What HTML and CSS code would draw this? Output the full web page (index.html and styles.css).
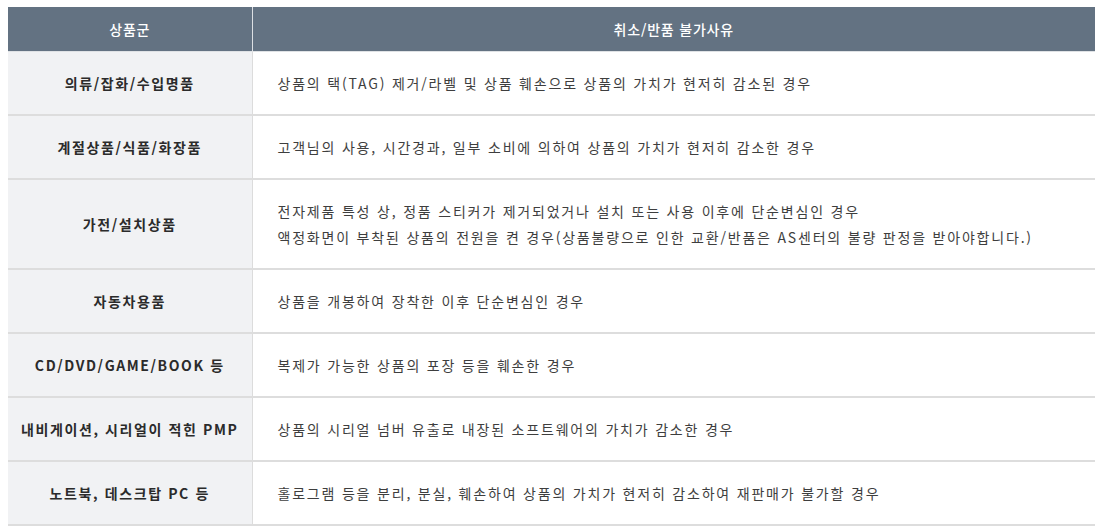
FILE: index.html
```html
<!DOCTYPE html>
<html lang="ko">
<head>
<meta charset="utf-8">
<link rel="stylesheet" href="styles.css">
</head>
<body>
<table class="policy">
  <colgroup><col class="c1"><col class="c2"></colgroup>
  <thead>
    <tr><th>상품군</th><th>취소/반품 불가사유</th></tr>
  </thead>
  <tbody>
    <tr><th>의류/잡화/수입명품</th><td>상품의 택(TAG) 제거/라벨 및 상품 훼손으로 상품의 가치가 현저히 감소된 경우</td></tr>
    <tr><th>계절상품/식품/화장품</th><td>고객님의 사용, 시간경과, 일부 소비에 의하여 상품의 가치가 현저히 감소한 경우</td></tr>
    <tr><th>가전/설치상품</th><td>전자제품 특성 상, 정품 스티커가 제거되었거나 설치 또는 사용 이후에 단순변심인 경우<br>액정화면이 부착된 상품의 전원을 켠 경우(상품불량으로 인한 교환/반품은 AS센터의 불량 판정을 받아야합니다.)</td></tr>
    <tr><th>자동차용품</th><td>상품을 개봉하여 장착한 이후 단순변심인 경우</td></tr>
    <tr><th>CD/DVD/GAME/BOOK 등</th><td>복제가 가능한 상품의 포장 등을 훼손한 경우</td></tr>
    <tr><th>내비게이션, 시리얼이 적힌 PMP</th><td>상품의 시리얼 넘버 유출로 내장된 소프트웨어의 가치가 감소한 경우</td></tr>
    <tr><th>노트북, 데스크탑 PC 등</th><td>홀로그램 등을 분리, 분실, 훼손하여 상품의 가치가 현저히 감소하여 재판매가 불가할 경우</td></tr>
  </tbody>
</table>
</body>
</html>
```
FILE: styles.css
```css
html, body {
  margin: 0;
  padding: 0;
  background: #ffffff;
}
body {
  padding: 7px 8px 0 8px;
  font-family: "Noto Sans CJK KR", "Noto Sans", sans-serif;
}
.policy {
  width: 1087px;
  border-collapse: collapse;
  table-layout: fixed;
  font-size: 14px;
}
.policy .c1 { width: 244px; }
.policy thead th {
  background: #637282;
  color: #ffffff;
  font-size: 14px;
  font-weight: 500;
  letter-spacing: 0.8px;
  height: 44px;
  padding: 0;
  text-align: center;
  border-left: 1px solid #dcdfe3;
  border-bottom: 1px solid #dfe2e5;
}
.policy thead th:first-child { border-left: none; }
.policy tbody th {
  background: #f1f2f4;
  color: #2b2b2b;
  font-size: 14px;
  font-weight: 700;
  letter-spacing: 1.6px;
  text-align: center;
  padding: 0;
  border-right: 1px solid #dcdcdc;
}
.policy tbody tr {
  border-bottom: 2px solid #dddddd;
}
.policy tbody td {
  color: #3e3e3e;
  font-size: 14px;
  letter-spacing: 1.8px;
  line-height: 26px;
  padding: 18px 0 18px 25px;
  text-align: left;
}
```
